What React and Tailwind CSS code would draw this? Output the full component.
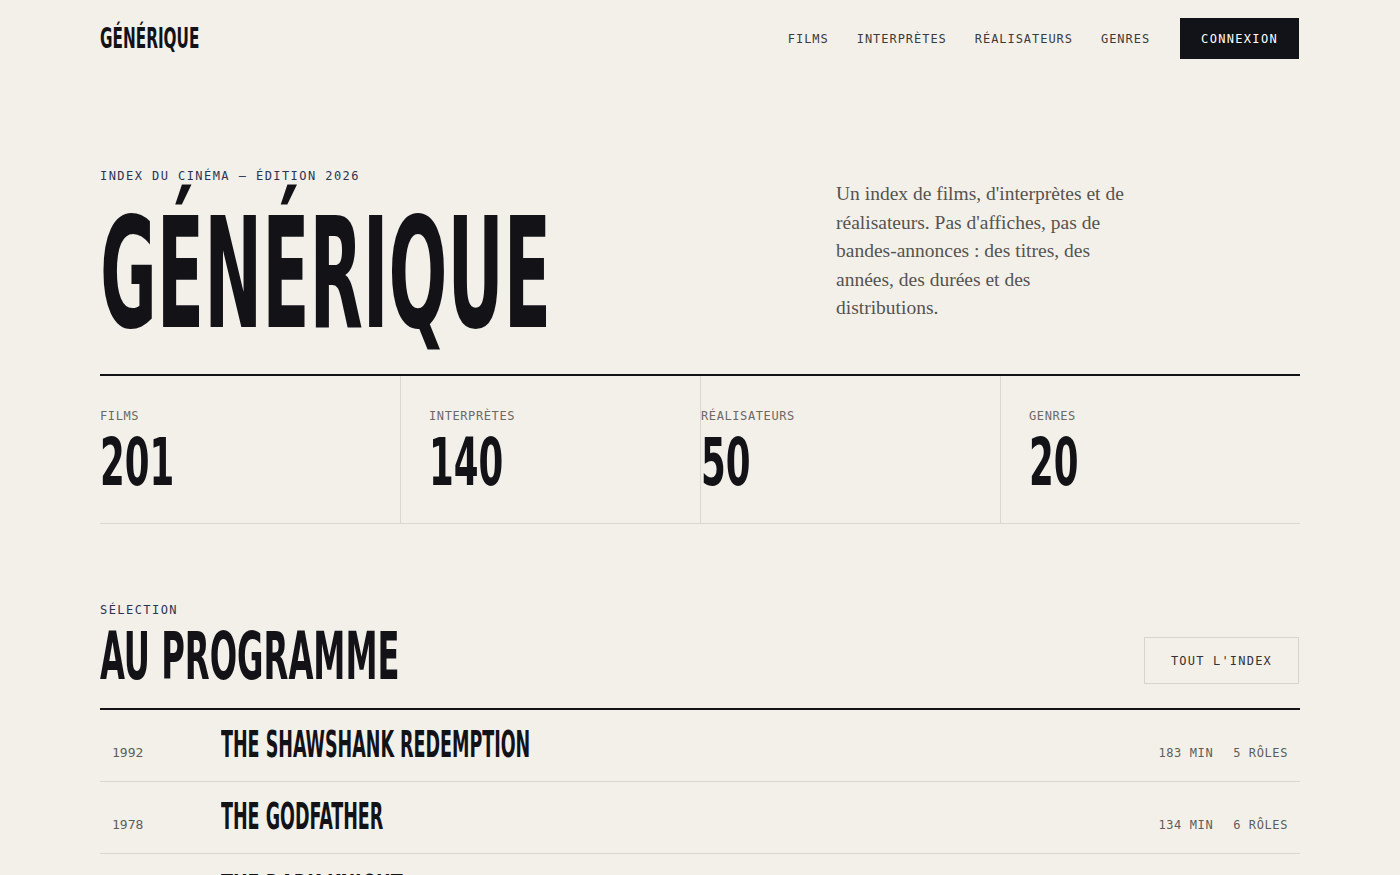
import React from "react";

const mono = "font-['DejaVu_Sans_Mono',monospace]";
const cond = "font-['DejaVu_Sans_Condensed','DejaVu_Sans',sans-serif] font-bold";

const films = [
  { year: "1992", title: "THE SHAWSHANK REDEMPTION", min: "183 MIN", roles: "5 RÔLES" },
  { year: "1978", title: "THE GODFATHER", min: "134 MIN", roles: "6 RÔLES" },
  { year: "2008", title: "THE DARK KNIGHT", min: "152 MIN", roles: "7 RÔLES" },
  { year: "1994", title: "PULP FICTION", min: "154 MIN", roles: "8 RÔLES" },
];

const stats = [
  { label: "FILMS", value: "201", cls: "pl-0" },
  { label: "INTERPRÈTES", value: "140", cls: "pl-7 border-l border-[#dcd7ce]" },
  { label: "RÉALISATEURS", value: "50", cls: "pl-0 border-l border-[#dcd7ce]" },
  { label: "GENRES", value: "20", cls: "pl-7 border-l border-[#dcd7ce]" },
];

export default function App() {
  return (
    <div className="min-h-screen bg-[#f3f0ea] text-[#121217]">
      <div className="mx-auto w-[1200px]">
        {/* NAV */}
        <nav className="h-[77px] flex items-center justify-between">
          <span className={`block w-max origin-left leading-none text-[29px] ${cond} scale-x-[0.585]`}>GÉNÉRIQUE</span>
          <div className={`flex items-center gap-7 ${mono} text-[12px] tracking-[0.08em] text-[#3b3b3b]`}>
            <a>FILMS</a>
            <a>INTERPRÈTES</a>
            <a>RÉALISATEURS</a>
            <a>GENRES</a>
            <button className="ml-[2px] mr-[1px] h-[41px] px-[21px] bg-[#121219] text-white tracking-[0.11em]">CONNEXION</button>
          </div>
        </nav>

        {/* HERO */}
        <section className="pt-[91px] pb-[23px] grid grid-cols-[minmax(0,1fr)_464px]">
          <div>
            <div className={`${mono} text-[12px] leading-[16px] tracking-[0.12em] text-[#2b3452]`}>INDEX DU CINÉMA — ÉDITION 2026</div>
            <span className={`mt-[13px] block w-max origin-left leading-none text-[154px] ${cond} scale-x-[0.5]`}>GÉNÉRIQUE</span>
          </div>
          <p className="mt-3 w-[300px] font-['Liberation_Serif',serif] text-[19.5px] leading-[28.5px] text-[#56534f]">
            Un index de films, d'interprètes et de réalisateurs. Pas d'affiches, pas de bandes-annonces : des titres, des années, des durées et des distributions.
          </p>
        </section>

        {/* STATS */}
        <section className="grid grid-cols-4 border-t-2 border-t-[#121217] border-b border-b-[#dcd7ce]">
          {stats.map((s) => (
            <div key={s.label} className={`pt-8 pb-[27px] ${s.cls}`}>
              <div className={`${mono} text-[12px] leading-[16px] tracking-[0.05em] text-[#6b6966]`}>{s.label}</div>
              <span className={`mt-[6px] block w-max origin-left leading-none text-[66px] ${cond} scale-x-[0.6]`}>{s.value}</span>
            </div>
          ))}
        </section>

        {/* PROGRAMME */}
        <section className="mt-[78px]">
          <div className="mb-[18px] flex items-end justify-between">
            <div>
              <div className={`${mono} text-[12px] leading-[16px] tracking-[0.12em] text-[#2b3452]`}>SÉLECTION</div>
              <span className={`mt-[6px] block w-max origin-left leading-none text-[66px] ${cond} scale-x-[0.543]`}>AU PROGRAMME</span>
            </div>
            <button className={`mb-[6px] mr-[1px] h-[47px] px-[26px] border border-[#d9d4cb] ${mono} text-[12px] tracking-[0.1em] text-[#333]`}>TOUT L'INDEX</button>
          </div>
          <div className="border-t-2 border-[#121217]">
            {films.map((f) => (
              <div key={f.title} className="flex items-baseline pt-4 pb-[18px] border-b border-[#dcd7ce]">
                <div className={`w-[121px] shrink-0 pl-3 ${mono} text-[13px] text-[#5f5d5a]`}>{f.year}</div>
                <div className="flex-1 min-w-0">
                  <span className={`block w-max origin-left leading-none text-[37px] ${cond} scale-x-[0.526]`}>{f.title}</span>
                </div>
                <div className={`flex gap-5 pr-3 ${mono} text-[12px] tracking-[0.05em] text-[#5f5d5a]`}>
                  <span>{f.min}</span>
                  <span>{f.roles}</span>
                </div>
              </div>
            ))}
          </div>
        </section>
        <div className="h-24" />
      </div>
    </div>
  );
}
